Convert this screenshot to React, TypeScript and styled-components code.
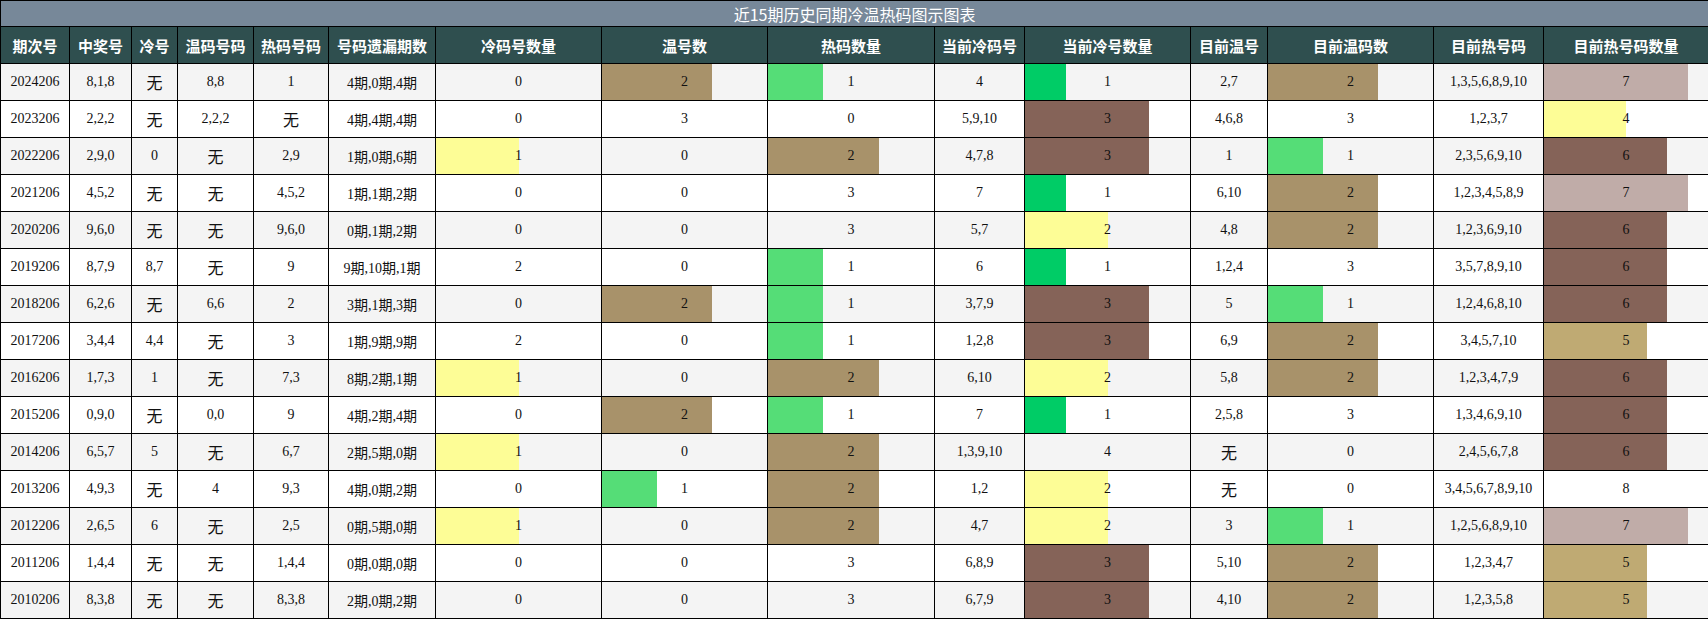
import React from "react";
import styled, { createGlobalStyle } from "styled-components";

const Global = createGlobalStyle`
  body { margin: 0; background: #fff; }
`;

const widths = [69, 62, 46, 76, 75, 107, 166, 166, 167, 90, 166, 77, 166, 110, 165];
const headers = ["期次号", "中奖号", "冷号", "温码号码", "热码号码", "号码遗漏期数", "冷码号数量", "温号数", "热码数量", "当前冷码号", "当前冷号数量", "目前温号", "目前温码数", "目前热号码", "目前热号码数量"];
const barCols: Record<number, number> = { 6: 2, 7: 3, 8: 3, 10: 4, 12: 3, 14: 8 };

const colorFor = (n: number, k: number): string | null => {
  if (n <= 0 || n >= k) return null;
  const map: Record<string, string> = {
    "1/4": "#00cc66",
    "1/3": "#55dd77",
    "1/2": "#fdfd96",
    "2/4": "#fdfd96",
    "4/8": "#fdfd96",
    "2/3": "#a8926a",
    "3/4": "#856358",
    "6/8": "#856358",
    "5/8": "#bfaa73",
    "7/8": "#c0aca8",
  };
  return map[`${n}/${k}`] || null;
};

const rows: string[][] = [
  ["2024206", "8,1,8", "无", "8,8", "1", "4期,0期,4期", "0", "2", "1", "4", "1", "2,7", "2", "1,3,5,6,8,9,10", "7"],
  ["2023206", "2,2,2", "无", "2,2,2", "无", "4期,4期,4期", "0", "3", "0", "5,9,10", "3", "4,6,8", "3", "1,2,3,7", "4"],
  ["2022206", "2,9,0", "0", "无", "2,9", "1期,0期,6期", "1", "0", "2", "4,7,8", "3", "1", "1", "2,3,5,6,9,10", "6"],
  ["2021206", "4,5,2", "无", "无", "4,5,2", "1期,1期,2期", "0", "0", "3", "7", "1", "6,10", "2", "1,2,3,4,5,8,9", "7"],
  ["2020206", "9,6,0", "无", "无", "9,6,0", "0期,1期,2期", "0", "0", "3", "5,7", "2", "4,8", "2", "1,2,3,6,9,10", "6"],
  ["2019206", "8,7,9", "8,7", "无", "9", "9期,10期,1期", "2", "0", "1", "6", "1", "1,2,4", "3", "3,5,7,8,9,10", "6"],
  ["2018206", "6,2,6", "无", "6,6", "2", "3期,1期,3期", "0", "2", "1", "3,7,9", "3", "5", "1", "1,2,4,6,8,10", "6"],
  ["2017206", "3,4,4", "4,4", "无", "3", "1期,9期,9期", "2", "0", "1", "1,2,8", "3", "6,9", "2", "3,4,5,7,10", "5"],
  ["2016206", "1,7,3", "1", "无", "7,3", "8期,2期,1期", "1", "0", "2", "6,10", "2", "5,8", "2", "1,2,3,4,7,9", "6"],
  ["2015206", "0,9,0", "无", "0,0", "9", "4期,2期,4期", "0", "2", "1", "7", "1", "2,5,8", "3", "1,3,4,6,9,10", "6"],
  ["2014206", "6,5,7", "5", "无", "6,7", "2期,5期,0期", "1", "0", "2", "1,3,9,10", "4", "无", "0", "2,4,5,6,7,8", "6"],
  ["2013206", "4,9,3", "无", "4", "9,3", "4期,0期,2期", "0", "1", "2", "1,2", "2", "无", "0", "3,4,5,6,7,8,9,10", "8"],
  ["2012206", "2,6,5", "6", "无", "2,5", "0期,5期,0期", "1", "0", "2", "4,7", "2", "3", "1", "1,2,5,6,8,9,10", "7"],
  ["2011206", "1,4,4", "无", "无", "1,4,4", "0期,0期,0期", "0", "0", "3", "6,8,9", "3", "5,10", "2", "1,2,3,4,7", "5"],
  ["2010206", "8,3,8", "无", "无", "8,3,8", "2期,0期,2期", "0", "0", "3", "6,7,9", "3", "4,10", "2", "1,2,3,5,8", "5"],
];

const Table = styled.table`
  width: 1708px;
  border-collapse: collapse;
  table-layout: fixed;
  font-family: "Liberation Serif", "Noto Sans CJK SC", serif;
  font-size: 14px;
  color: #111;
`;

const TitleCell = styled.th`
  height: 25px;
  padding: 0;
  background: #778899;
  color: #fff;
  font-family: "Noto Sans CJK SC", sans-serif;
  font-weight: normal;
  font-size: 16px;
  border: 1px solid #000;
  line-height: 24px;
`;

const HeadCell = styled.th`
  height: 36px;
  padding: 0;
  background: #2f4f4f;
  color: #fff;
  font-family: "Noto Sans CJK SC", sans-serif;
  font-weight: bold;
  font-size: 15px;
  border: 1px solid #000;
`;

const Row = styled.tr<{ $alt: boolean }>`
  background: ${(p) => (p.$alt ? "#f4f4f4" : "#ffffff")};
`;

const Cell = styled.td`
  height: 36px;
  padding: 0;
  border: 1px solid #000;
  text-align: center;
  position: relative;
  white-space: nowrap;
`;

const Bar = styled.div<{ $color: string }>`
  position: absolute;
  left: 0;
  top: 0;
  bottom: 0;
  background: ${(p) => p.$color};
`;

const Label = styled.span<{ $cjk: boolean }>`
  position: relative;
  font-size: ${(p) => (p.$cjk ? "16px" : "14px")};
`;

export default function App() {
  return (
    <>
      <Global />
      <Table>
        <colgroup>
          {widths.map((w, i) => (
            <col key={i} style={{ width: w }} />
          ))}
        </colgroup>
        <thead>
          <tr>
            <TitleCell colSpan={15}>近15期历史同期冷温热码图示图表</TitleCell>
          </tr>
          <tr>
            {headers.map((h) => (
              <HeadCell key={h}>{h}</HeadCell>
            ))}
          </tr>
        </thead>
        <tbody>
          {rows.map((r, ri) => (
            <Row key={ri} $alt={ri % 2 === 0}>
              {r.map((c, ci) => {
                const k = barCols[ci];
                const n = Number(c);
                const color = k ? colorFor(n, k) : null;
                return (
                  <Cell key={ci}>
                    {color && <Bar $color={color} style={{ width: `${(n / k) * 100}%` }} />}
                    <Label $cjk={c === "无"}>{c}</Label>
                  </Cell>
                );
              })}
            </Row>
          ))}
        </tbody>
      </Table>
    </>
  );
}
